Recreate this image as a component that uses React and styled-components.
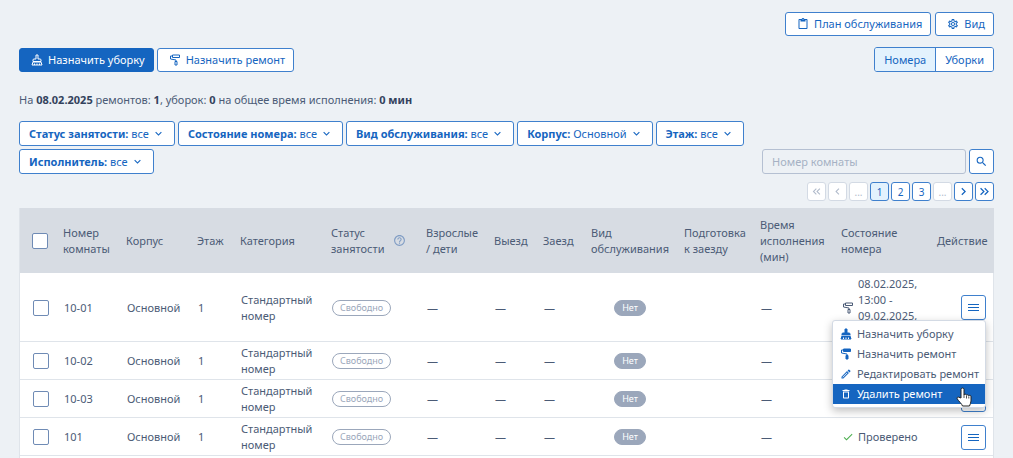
import React, { useState } from 'react';
import styled, { createGlobalStyle, css } from 'styled-components';
import {
  MdCheck,
  MdContentPaste,
  MdDeleteOutline,
  MdHelpOutline,
  MdKeyboardArrowDown,
  MdKeyboardArrowLeft,
  MdKeyboardArrowRight,
  MdKeyboardDoubleArrowLeft,
  MdKeyboardDoubleArrowRight,
  MdOutlineEdit,
  MdOutlineSettings,
  MdSearch,
} from 'react-icons/md';

const filters = [
  { label: 'Статус занятости', value: 'все' },
  { label: 'Состояние номера', value: 'все' },
  { label: 'Вид обслуживания', value: 'все' },
  { label: 'Корпус', value: 'Основной' },
  { label: 'Этаж', value: 'все' },
  { label: 'Исполнитель', value: 'все' },
];

const columns = [36, 63, 71, 43, 91, 95, 68, 49, 48, 93, 76, 81, 96, 64];

const rooms = [
  { number: '10-01', repair: '08.02.2025, 13:00 - 09.02.2025,', menu: true },
  { number: '10-02' },
  { number: '10-03' },
  { number: '101', checked: true },
];

function BroomIcon({ solid }) {
  const fill = solid ? 'currentColor' : 'none';

  return (
    <svg viewBox="0 0 24 24" width="12" height="12" aria-hidden="true">
      <path
        d="M10 2h4v8h4a2 2 0 0 1 2 2v3H4v-3a2 2 0 0 1 2-2h4z"
        fill={fill}
        stroke="currentColor"
        strokeWidth="2"
      />
      <path d="M4 16h16l2 6H2z" fill={fill} stroke="currentColor" strokeWidth="2" />
      <path
        d="M7 22v-3M12 22v-3M17 22v-3"
        stroke={solid ? '#fff' : 'currentColor'}
        strokeWidth="2"
      />
      {solid && <path d="M4 15h16" stroke="#fff" strokeWidth="1.200" />}
    </svg>
  );
}

function RollerIcon({ solid }) {
  const fill = solid ? 'currentColor' : 'none';

  return (
    <svg viewBox="0 0 24 24" width="12" height="12" aria-hidden="true">
      <path d="M7 2h14v5H7z" fill={fill} stroke="currentColor" strokeWidth="2" />
      <path d="M7 4H3v6l11 2v3" fill="none" stroke="currentColor" strokeWidth="2" />
      <path d="M12 15h4v7h-4z" fill={fill} stroke="currentColor" strokeWidth="2" />
    </svg>
  );
}

function LinesIcon() {
  return (
    <svg viewBox="0 0 11 7" width="11" height="7" aria-hidden="true">
      <path d="M0 0h11v1H0zM0 3h11v1H0zM0 6h11v1H0z" fill="currentColor" />
    </svg>
  );
}

function HandCursor() {
  return (
    <Hand viewBox="0 0 16 20" width="16" height="20" aria-hidden="true">
      <path
        d="M5 11V2.500a1.500 1.500 0 0 1 3 0V8a1.300 1.300 0 0 1 2.500.3 1.300 1.300 0 0 1 2.300.6 1.200 1.200 0 0 1 2.200.8V14c0 2-1 3-1.500 5H6.500C6 17 2.500 14 1.200 11.800.6 10.500 2 9.600 3 10.300z"
        fill="#fff"
        stroke="#222"
        strokeLinejoin="round"
      />
      <path d="M8 8v3M10.500 9v2.500M12.800 9.500v2" stroke="#222" strokeWidth="0.8" />
    </Hand>
  );
}

function RoomRow({ room }) {
  return (
    <tr>
      <CheckCell>
        <Checkbox type="checkbox" aria-label={`Выбрать номер ${room.number}`} />
      </CheckCell>
      <Cell>{room.number}</Cell>
      <Cell>Основной</Cell>
      <Cell>1</Cell>
      <Cell>Стандартный номер</Cell>
      <Cell>
        <Badge>Свободно</Badge>
      </Cell>
      <Cell>—</Cell>
      <Cell>—</Cell>
      <Cell>—</Cell>
      <ServiceCell>
        <Badge $filled>Нет</Badge>
      </ServiceCell>
      <Cell />
      <Cell>—</Cell>
      <Cell>
        {room.repair && (
          <RepairState>
            <RollerIcon />
            <span>{room.repair}</span>
          </RepairState>
        )}
        {room.checked && (
          <State $ok>
            <MdCheck size={12} />
            <span>Проверено</span>
          </State>
        )}
      </Cell>
      <ActionCell>
        <MenuAnchor>
          <SquareButton type="button" aria-label={`Действия: ${room.number}`}>
            <LinesIcon />
          </SquareButton>
          {room.menu && (
            <Menu>
              <MenuItem type="button">
                <BroomIcon solid />
                Назначить уборку
              </MenuItem>
              <MenuItem type="button">
                <RollerIcon solid />
                Назначить ремонт
              </MenuItem>
              <MenuItem type="button">
                <MdOutlineEdit size={12} />
                Редактировать ремонт
              </MenuItem>
              <MenuItem type="button" $active>
                <MdDeleteOutline size={12} />
                Удалить ремонт
                <HandCursor />
              </MenuItem>
            </Menu>
          )}
        </MenuAnchor>
      </ActionCell>
    </tr>
  );
}

function App() {
  const [view, setView] = useState('rooms');

  return (
    <>
      <GlobalStyle />
      <Page>
        <TopBar>
          <Button type="button">
            <MdContentPaste size={12} />
            План обслуживания
          </Button>
          <Button type="button">
            <MdOutlineSettings size={12} />
            Вид
          </Button>
        </TopBar>

        <Toolbar>
          <ButtonGroup>
            <Button type="button" $primary>
              <BroomIcon />
              Назначить уборку
            </Button>
            <Button type="button">
              <RollerIcon />
              Назначить ремонт
            </Button>
          </ButtonGroup>
          <Switcher>
            <SwitchButton type="button" $active={view === 'rooms'} onClick={() => setView('rooms')}>
              Номера
            </SwitchButton>
            <SwitchButton type="button" $active={view === 'cleaning'} onClick={() => setView('cleaning')}>
              Уборки
            </SwitchButton>
          </Switcher>
        </Toolbar>

        <Summary>
          На <b>08.02.2025</b> ремонтов: <b>1</b>, уборок: <b>0</b> на общее время исполнения: <b>0 мин</b>
        </Summary>

        <FilterBar>
          <Filters>
            {filters.map((filter) => (
              <FilterButton type="button" key={filter.label}>
                <span>
                  <b>{filter.label}:</b> {filter.value}
                </span>
                <MdKeyboardArrowDown size={13} />
              </FilterButton>
            ))}
          </Filters>
          <Search>
            <SearchInput type="text" placeholder="Номер комнаты" aria-label="Номер комнаты" />
            <SquareButton type="submit" aria-label="Найти">
              <MdSearch size={13} />
            </SquareButton>
          </Search>
        </FilterBar>

        <Pager>
          <PageButton type="button" disabled aria-label="Первая страница">
            <MdKeyboardDoubleArrowLeft size={13} />
          </PageButton>
          <PageButton type="button" disabled aria-label="Предыдущая страница">
            <MdKeyboardArrowLeft size={13} />
          </PageButton>
          <PageButton type="button" disabled>...</PageButton>
          <PageButton type="button" $active>1</PageButton>
          <PageButton type="button">2</PageButton>
          <PageButton type="button">3</PageButton>
          <PageButton type="button" disabled>...</PageButton>
          <PageButton type="button" aria-label="Следующая страница">
            <MdKeyboardArrowRight size={15} />
          </PageButton>
          <PageButton type="button" aria-label="Последняя страница">
            <MdKeyboardDoubleArrowRight size={15} />
          </PageButton>
        </Pager>

        <TableWrapper>
          <Table>
            <colgroup>
              {columns.map((width, index) => (
                <col key={index} width={width} />
              ))}
            </colgroup>
            <thead>
              <tr>
                <CheckHead>
                  <Checkbox type="checkbox" aria-label="Выбрать все номера" />
                </CheckHead>
                <Head>Номер комнаты</Head>
                <Head>Корпус</Head>
                <Head>Этаж</Head>
                <Head>Категория</Head>
                <Head>
                  <HeadHelp>
                    <span>Статус занятости</span>
                    <MdHelpOutline size={13} />
                  </HeadHelp>
                </Head>
                <Head>
                  Взрослые
                  <br />/ дети
                </Head>
                <Head>Выезд</Head>
                <Head>Заезд</Head>
                <Head>Вид обслуживания</Head>
                <Head>Подготовка к заезду</Head>
                <Head>Время исполнения (мин)</Head>
                <Head>Состояние номера</Head>
                <Head>Действие</Head>
              </tr>
            </thead>
            <tbody>
              {rooms.map((room) => (
                <RoomRow key={room.number} room={room} />
              ))}
            </tbody>
          </Table>
        </TableWrapper>
      </Page>
    </>
  );
}

const GlobalStyle = createGlobalStyle`
  * {
    box-sizing: border-box;
  }

  body {
    margin: 0;
    background: #edf1f5;
    color: #4b5b76;
    font-family: 'Noto Sans', sans-serif;
    font-size: 11px;
    line-height: 16px;
  }

  button,
  input {
    font: inherit;
  }

  button {
    cursor: pointer;
  }

  svg {
    flex: none;
  }
`;

const Page = styled.div`
  display: flex;
  flex-direction: column;
  min-height: 100vh;
  padding: 12px 19px 0;
`;

const outlined = css`
  display: inline-flex;
  align-items: center;
  justify-content: center;
  border: 1px solid #3f80cd;
  border-radius: 3px;
  background: #fff;
  color: #1565c0;
`;

const TopBar = styled.div`
  display: flex;
  justify-content: flex-end;
  gap: 4px;
  margin-bottom: 11px;
`;

const Toolbar = styled.div`
  display: flex;
  justify-content: space-between;
  align-items: center;
`;

const ButtonGroup = styled.div`
  display: flex;
  gap: 3px;
`;

const Button = styled.button`
  ${outlined}
  gap: 5px;
  height: 24px;
  padding: 0 8px 0 11px;
  ${({ $primary }) =>
    $primary &&
    css`
      background: #1565c0;
      border-color: #1565c0;
      color: #fff;
    `}
`;

const Switcher = styled.div`
  display: flex;
  border: 1px solid #3f80cd;
  border-radius: 3px;
  overflow: hidden;
`;

const SwitchButton = styled.button`
  height: 23px;
  padding: 0 9px;
  border: 0;
  background: ${({ $active }) => ($active ? '#e3f2fd' : '#fff')};
  color: #1565c0;

  & + & {
    border-left: 1px solid #3f80cd;
  }
`;

const Summary = styled.p`
  margin: 20px 0 13px;

  b {
    color: #33425c;
  }
`;

const FilterBar = styled.div`
  display: flex;
  justify-content: space-between;
  align-items: flex-end;
  gap: 12px;
`;

const Filters = styled.div`
  display: flex;
  flex: 1;
  flex-wrap: wrap;
  gap: 3px;
`;

const FilterButton = styled.button`
  ${outlined}
  gap: 3px;
  height: 25px;
  padding: 0 9px;
`;

const Search = styled.div`
  display: flex;
  gap: 3px;
`;

const SearchInput = styled.input`
  width: 204px;
  height: 25px;
  padding: 0 9px;
  border: 1px solid #b5c0d2;
  border-radius: 3px;
  background: transparent;
  color: #4b5b76;

  &::placeholder {
    color: #a6b1c4;
  }
`;

const SquareButton = styled.button`
  ${outlined}
  width: 25px;
  height: 25px;
  padding: 0;
`;

const Pager = styled.div`
  display: flex;
  justify-content: flex-end;
  gap: 2px;
  margin: 8px 0 7px;
`;

const PageButton = styled.button`
  ${outlined}
  width: 19px;
  height: 19px;
  padding: 0;
  font-size: 10px;
  background: ${({ $active }) => ($active ? '#e3f2fd' : '#fff')};

  &:disabled {
    border-color: #d3dae4;
    color: #b1bbcb;
  }
`;

const TableWrapper = styled.div`
  flex: 1;
  border: solid #dfe4ea;
  border-width: 0 1px;
  background: #fff;
`;

const Table = styled.table`
  width: 100%;
  table-layout: fixed;
  border-collapse: collapse;
`;

const Head = styled.th`
  height: 65px;
  padding: 8px 0 8px 7px;
  background: #d7dce3;
  font-weight: 400;
  text-align: left;
  vertical-align: middle;
`;

const CheckHead = styled(Head)`
  padding-left: 12px;
`;

const HeadHelp = styled.div`
  display: flex;
  align-items: center;
  gap: 8px;

  span {
    width: min-content;
  }

  svg {
    color: #7f9cc4;
  }
`;

const Cell = styled.td`
  padding: 3px 0 2px 8px;
  border-bottom: 1px solid #dfe4ea;
  vertical-align: middle;
`;

const CheckCell = styled(Cell)`
  padding-left: 13px;
`;

const ServiceCell = styled(Cell)`
  padding-right: 9px;
  text-align: center;
`;

const ActionCell = styled(Cell)`
  padding-right: 8px;
`;

const Checkbox = styled.input`
  appearance: none;
  display: block;
  width: 16px;
  height: 16px;
  margin: 0;
  border: 1px solid #6f8bb5;
  border-radius: 2px;
  background: #fff;
`;

const Badge = styled.span`
  display: block;
  width: fit-content;
  padding: 0 7px;
  border: 1px solid #9ba7bb;
  border-radius: 8px;
  background: ${({ $filled }) => ($filled ? '#9ba7bb' : '#fff')};
  color: ${({ $filled }) => ($filled ? '#fff' : '#9ba7bb')};
  font-size: 9px;
  line-height: 14px;

  ${ServiceCell} & {
    margin: 0 auto;
  }
`;

const State = styled.div`
  display: flex;
  align-items: center;
  gap: 4px;

  svg {
    color: ${({ $ok }) => ($ok ? '#4caf50' : '#4b5b76')};
  }
`;

const RepairState = styled(State)`
  min-height: 63px;

  span {
    align-self: flex-start;
  }
`;

const MenuAnchor = styled.div`
  display: flex;
  justify-content: flex-end;
  position: relative;
`;

const Menu = styled.div`
  position: absolute;
  top: 100%;
  right: 0;
  z-index: 10;
  padding: 3px 0;
  border: 1px solid #d3dae4;
  border-radius: 3px;
  background: #fff;
  box-shadow: 0 3px 8px rgba(0, 0, 0, 0.25);
`;

const MenuItem = styled.button`
  position: relative;
  display: flex;
  align-items: center;
  gap: 5px;
  width: 100%;
  height: 20px;
  padding: 0 6px 0 7px;
  border: 0;
  background: ${({ $active }) => ($active ? '#1565c0' : '#fff')};
  color: ${({ $active }) => ($active ? '#fff' : '#4b5b76')};
  white-space: nowrap;

  svg {
    color: ${({ $active }) => ($active ? '#fff' : '#1565c0')};
  }
`;

const Hand = styled.svg`
  position: absolute;
  top: 3px;
  right: 13px;
`;

export default App;
